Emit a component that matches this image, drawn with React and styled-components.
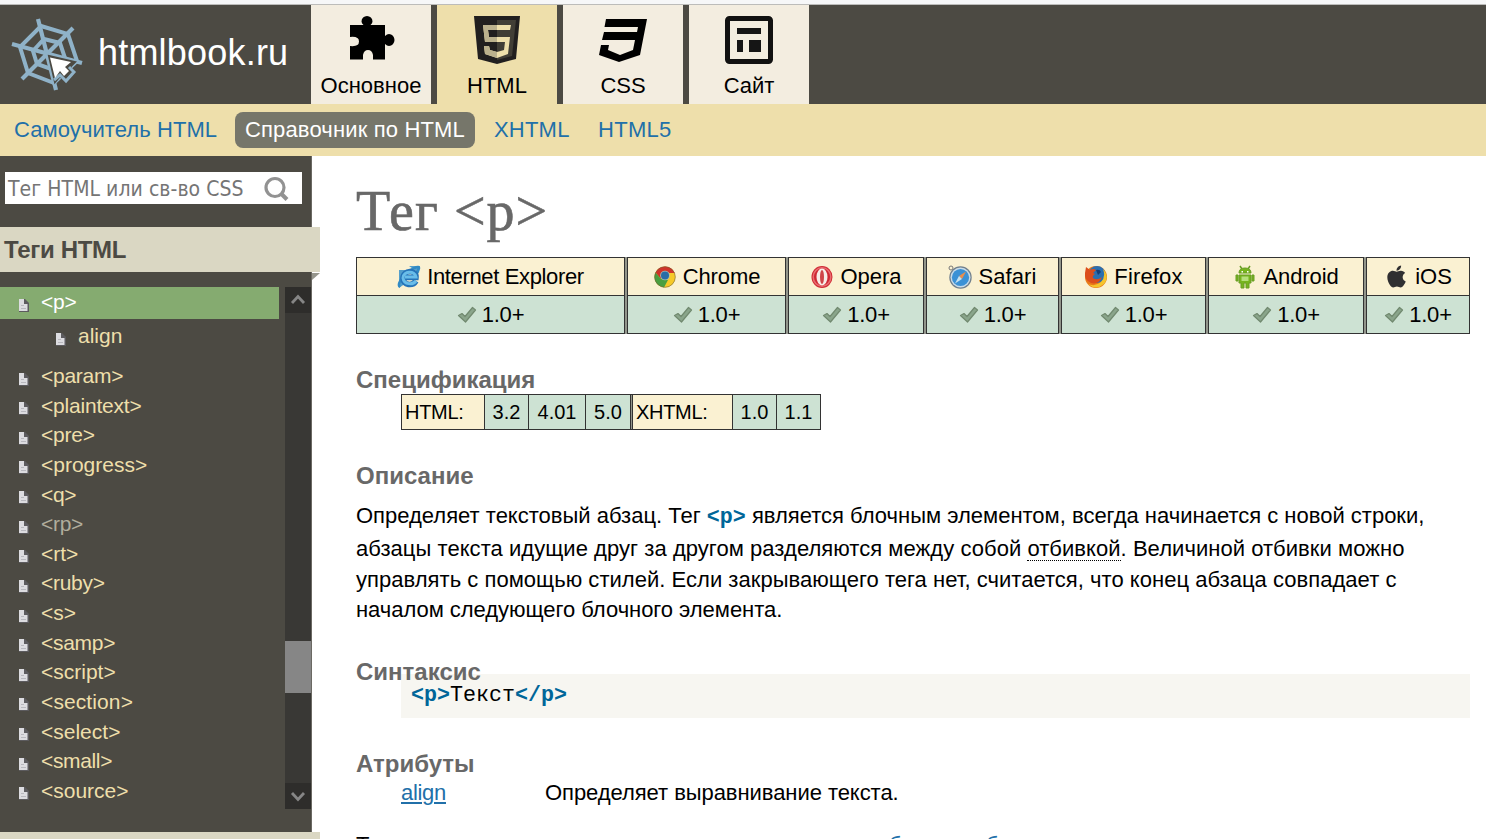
import React from "react";
import styled, { createGlobalStyle } from "styled-components";
import { FaApple } from "react-icons/fa";

const Global = createGlobalStyle`
  * { box-sizing: border-box; }
  body { margin: 0; background: #fff; overflow: hidden; }
  a { color: inherit; text-decoration: none; }
`;

const Page = styled.div`
  width: 1486px;
  height: 839px;
  overflow: hidden;
  display: flex;
  flex-direction: column;
  font: 22px "Liberation Sans", Arial, sans-serif;
  color: #000;
  white-space: nowrap;
`;
const TopStrip = styled.div`
  height: 5px;
  flex: none;
  background: #f6f7f8;
  border-bottom: 1px solid #bcbcba;
`;
const Header = styled.header`
  height: 99px;
  flex: none;
  display: flex;
  background: #4c4a43;
`;
const Brand = styled.a`
  width: 311px;
  display: flex;
  align-items: center;
  color: #fff;
  font-size: 36px;
  padding-bottom: 3px;
  letter-spacing: 0.2px;
  svg { flex: none; margin-right: 7px; }
`;
const Tabs = styled.nav`
  display: flex;
  gap: 6px;
`;
const Tab = styled.a`
  width: 120px;
  display: flex;
  flex-direction: column;
  align-items: center;
  padding-top: 11px;
  line-height: 26px;
  background: ${(p) => (p.$active ? "#eedfab" : "#f3ede0")};
  svg { margin-bottom: 9px; flex: none; }
`;
const SubNav = styled.nav`
  height: 52px;
  flex: none;
  display: flex;
  align-items: center;
  padding-left: 3px;
  background: #eedfab;
`;
const SubLink = styled.a`
  height: 36px;
  line-height: 35px;
  width: ${(p) => p.$w}px;
  padding-left: ${(p) => (p.$active ? 10 : 11)}px;
  margin-right: 8px;
  border-radius: 8px;
  color: ${(p) => (p.$active ? "#fff" : "#2170a9")};
  background: ${(p) => (p.$active ? "#76766a" : "transparent")};
  letter-spacing: ${(p) => p.$track || 0}px;
`;
const Body = styled.div`
  flex: 1;
  min-height: 0;
  display: flex;
`;
const Sidebar = styled.aside`
  width: 312px;
  flex: none;
  display: flex;
  flex-direction: column;
  background: #4c4a43;
  border-right: 1px solid #6b6963;
`;
const Search = styled.div`
  margin: 16px 9px 23px 5px;
  height: 32px;
  flex: none;
  display: flex;
  align-items: center;
  justify-content: space-between;
  padding: 1px 13px 0 3px;
  background: #fff;
  color: #757575;
  font: 21px "DejaVu Sans Condensed", "DejaVu Sans", sans-serif;
  font-stretch: condensed;
  letter-spacing: 0.05px;
`;
const Band = styled.div`
  width: 320px;
  height: 45px;
  flex: none;
  position: relative;
  padding-left: 4px;
  font-weight: bold;
  font-size: 24px;
  line-height: 45px;
  letter-spacing: -0.3px;
  color: #4c4a43;
  background: #dad7c3;
`;
const Fold = styled.svg`
  position: absolute;
  left: 312px;
  top: 46px;
`;
const ListArea = styled.div`
  height: 522px;
  flex: none;
  margin: 15px 0 23px;
  display: flex;
  justify-content: space-between;
`;
const TagList = styled.div`
  width: 279px;
  font-size: 21px;
  color: #eedfab;
`;
const TagRow = styled.a`
  display: flex;
  align-items: center;
  height: ${(p) => p.$h || 29.63}px;
  padding-left: ${(p) => (p.$nested ? 55 : 18)}px;
  margin-bottom: ${(p) => (p.$nested ? 7.8 : 0)}px;
  background: ${(p) => (p.$active ? "#85ab70" : "transparent")};
  color: ${(p) => (p.$active ? "#fff" : p.$muted ? "#b0ad9c" : "inherit")};
  svg { margin: 5px 12px 0 0; flex: none; }
  span { margin-top: ${(p) => (p.$active ? -2 : -1)}px; letter-spacing: ${(p) => p.$track || 0}px; }
`;
const ScrollBar = styled.div`
  width: 26px;
  display: flex;
  flex-direction: column;
  background: #393835;
`;
const ScrollButton = styled.div`
  height: 26px;
  background: #2e2d2b;
`;
const ScrollThumb = styled.div`
  height: 52px;
  margin: 328px 0 90px;
  background: #868686;
`;
const Main = styled.main`
  flex: 1;
  padding: 23px 16px 0 44px;
`;
const Title = styled.h1`
  margin: 0 0 14px;
  font: 56px/64px "Liberation Serif", "Times New Roman", serif;
  letter-spacing: 1px;
  -webkit-text-stroke: 0.6px #686868;
  color: #686868;
`;
const Support = styled.div`
  display: grid;
  grid-template-columns: 269px 159px 136px 133px 145px 156px 104px;
  gap: 0 2px;
  width: 1114px;
  height: 77px;
  background: #92958b;
`;
const Browser = styled.div`
  display: flex;
  flex-direction: column;
  border: 1px solid #333;
`;
const BrowserName = styled.div`
  height: 38px;
  display: flex;
  align-items: center;
  justify-content: center;
  gap: 6px;
  background: #faf1d2;
  border-bottom: 1px solid #333;
  letter-spacing: ${(p) => p.$track || 0}px;
`;
const BrowserVersion = styled.div`
  height: 37px;
  display: flex;
  align-items: center;
  justify-content: center;
  gap: 5px;
  letter-spacing: -0.2px;
  background: #cde2d3;
`;
const Heading = styled.h2`
  margin: ${(p) => p.$top}px 0 0;
  position: relative;
  font: bold 24px/28px "Liberation Sans", Arial, sans-serif;
  color: #686868;
`;
const SpecTable = styled.div`
  display: flex;
  margin-left: 45px;
  width: 420px;
  height: 36px;
  border: 1px solid #333;
  font-size: 20px;
  line-height: 34px;
`;
const Spec = styled.div`
  width: ${(p) => p.$w}px;
  padding-left: ${(p) => (p.$name ? 3 : 0)}px;
  text-align: ${(p) => (p.$name ? "left" : "center")};
  letter-spacing: ${(p) => (p.$name ? -0.3 : 0)}px;
  background: ${(p) => (p.$name ? "#faf1d2" : "#cde2d3")};
  border-right: ${(p) => (p.$last ? 0 : 1)}px solid #333;
`;
const SpecGap = styled.div`
  width: 2px;
  background: #92958b;
  border-right: 1px solid #333;
`;
const Paragraph = styled.p`
  margin: 9px 0 0;
`;
const Line = styled.span`
  display: block;
  height: ${(p) => p.$h}px;
  line-height: ${(p) => p.$h}px;
  letter-spacing: ${(p) => p.$track || 0}px;
`;
const Code = styled.code`
  font: bold 21.67px/1 "Liberation Mono", "Courier New", monospace;
  letter-spacing: 0;
  color: #069;
`;
const Term = styled.span`
  display: inline-block;
  line-height: 22px;
  border-bottom: 1px dotted #000;
`;
const Example = styled.pre`
  margin: -12px 0 0 45px;
  height: 44px;
  padding-left: 10px;
  background: #f7f6f1;
  font: 21.67px/43px "Liberation Mono", "Courier New", monospace;
`;
const Attribute = styled.div`
  display: flex;
  margin-left: 45px;
  line-height: 30px;
  a { width: 144px; color: #2170a9; text-decoration: underline; letter-spacing: -0.3px; }
  span { letter-spacing: -0.06px; }
`;
const More = styled.p`
  margin: 22px 0 0;
  line-height: 30px;
  a { color: #2170a9; }
`;

const Web = () => (
  <svg width="91" height="91" viewBox="0 8 91 91" fill="none" stroke="#8fb2c8" strokeWidth="4.200">
    <path d="M38 19 56 90M73 28 22 79M12 44 82 63" />
    <path d="M41 26 68 34 77 61 54 83 28 73 20 47ZM44 39 60 43 65 58 51 69 37 64 33 51Z" strokeWidth="4" />
    <path d="M49 56 75 62 70 67 74 72 65 81 60 76 55 82Z" fill="#4c4a43" stroke="#4c4a43" strokeWidth="2" />
    <path d="M54 80 60 75 66 81 74 72 69 67" strokeWidth="3" />
    <path d="M50 57.500 71 62 65 67 69 71 64 76 60 71 55 78Z" fill="#fff" stroke="none" />
  </svg>
);
const Puzzle = () => (
  <svg width="48" height="48" viewBox="0 0 48 48">
    <path d="M3 9H16.500Q14.500 7 14.500 5.500A5.500 5.500 0 0 1 25.500 5.500Q25.500 7 23.500 9H38V20Q40 18 42 18A5.500 6 0 0 1 42 30Q40 30 38 28V43.500H26V39Q25 34 21 34Q17 34 16 39V43.500H3V30Q12 31 12 25.500Q12 20 3 21Z" />
  </svg>
);
const Html5 = () => (
  <svg width="48" height="48" viewBox="0 0 48 48">
    <path d="M1 0H47L43 43 24 48 5 43Z" fill="#211f1f" />
    <path d="M24 4V44L39 40 43 4Z" fill="#413e36" />
    <path d="M38 9H10L12 26H32L31 34 24 36 17 34 16 30H11L12 38 24 42 35 38 37 21H16L15 14H37Z" fill="#eedfab" />
    <path d="M10 9H24V14H15L16 21H24V26H12ZM11 30H16L17 34 24 36V42L12 38Z" fill="#bbb18d" />
  </svg>
);
const Css3 = () => (
  <svg width="48" height="48" viewBox="0 0 48 48">
    <path d="M7 3H48L41 39 20 46 0 39 2 29H10L9 34 21 39 34 34 36 24H3L5 16H38L39 11H5.500Z" />
  </svg>
);
const Layout = () => (
  <svg width="48" height="48" viewBox="0 0 48 48">
    <rect x="2.500" y="2.500" width="43" height="43" rx="2" fill="none" stroke="#111" strokeWidth="5" />
    <path d="M12 12H36V18H12ZM12 24H18V36H12ZM24 24H36V36H24Z" fill="#151515" />
  </svg>
);
const Magnifier = () => (
  <svg width="26" height="26" viewBox="0 0 26 26" fill="none" stroke="#929292">
    <circle cx="12" cy="11.500" r="9" strokeWidth="3.200" />
    <path d="M18.500 18 24 23.500" strokeWidth="4" />
  </svg>
);
const Doc = () => (
  <svg width="11" height="13" viewBox="0 0 11 13">
    <path d="M1 0H7L11 4V13H1Z" fill="#5c5b5e" />
    <path d="M1 0H6V5H9.500V12H1Z" fill="#dcdce0" />
    <path d="M3 6H6V7H3ZM3 9H8V10H3Z" fill="#b8b8be" />
  </svg>
);
const Chevron = ({ down }) => (
  <svg width="26" height="26" viewBox="0 0 26 26" fill="none" stroke="#868686" strokeWidth="2.800">
    <path d={down ? "M7 10 13 16.500 19 10" : "M7 16 13 9.500 19 16"} />
  </svg>
);
const Check = () => (
  <svg width="20" height="18" viewBox="0 0 20 18">
    <path d="M1.500 9.500 5 7.500 8 10.500 15.500 1.500 18.500 4 8.500 16Z" fill="#8aa58b" stroke="#71896f" strokeWidth="1.200" strokeLinejoin="round" />
  </svg>
);
const IconBox = ({ children }) => (
  <svg width="24" height="24" viewBox="0 0 24 24">{children}</svg>
);
const Explorer = () => (
  <IconBox>
    <path d="M2 5H9L6 15 9 18 2 23ZM12 1H23L22 8Z" fill="#549fcb" />
    <path d="M3 22C0 20 4 12 12 6C18 2 22 1 22 3L20 8" fill="none" stroke="#318ac4" strokeWidth="2.600" />
    <path d="M19 16C16 21 6 21 6 13C6 5 20 4 19 12.500H8" fill="none" stroke="#2674b8" strokeWidth="5.600" />
    <path d="M19 16C16 20 7 20 6 13C6 6 18 5 19 12H8" fill="none" stroke="#69bde9" strokeWidth="3" />
  </IconBox>
);
const Chrome = () => (
  <IconBox>
    <circle cx="12" cy="12" r="10.500" fill="#f6c928" />
    <path d="M2.500 7.500A10.500 10.500 0 0 1 21.700 8L12 8 8 14Z" fill="#cf3329" />
    <path d="M2.500 7.500A10.500 10.500 0 0 0 11 22.500L15 15 8 14Z" fill="#4a9f40" />
    <circle cx="12" cy="12" r="10.300" fill="none" stroke="#705c38" strokeOpacity=".55" />
    <circle cx="12" cy="10.500" r="4.800" fill="#a9c3b6" />
    <circle cx="12" cy="10.500" r="4" fill="#286da7" />
  </IconBox>
);
const Opera = () => (
  <IconBox>
    <ellipse cx="12" cy="12" rx="10.500" ry="11" fill="#cf2934" />
    <ellipse cx="12" cy="12" rx="8.800" ry="9.300" fill="none" stroke="#e96c70" strokeWidth="1.500" />
    <ellipse cx="12" cy="12" rx="5.500" ry="8.500" fill="#f7ece7" />
    <ellipse cx="12" cy="12" rx="2" ry="7" fill="#cf4548" />
  </IconBox>
);
const Safari = () => (
  <IconBox>
    <circle cx="3" cy="3" r="2" fill="none" stroke="#777" />
    <circle cx="12.500" cy="12.500" r="11.200" fill="#71808d" />
    <circle cx="12.500" cy="12.500" r="10" fill="#c9dce9" />
    <circle cx="12.500" cy="12.500" r="8.600" fill="#3b91d5" />
    <path d="M18 6.500 14 14 11 11Z" fill="#e98e4d" />
    <path d="M7 18.500 11 11 14 14Z" fill="#c5e0ef" />
  </IconBox>
);
const Firefox = () => (
  <IconBox>
    <circle cx="12" cy="12" r="11" fill="#e97919" />
    <circle cx="13" cy="9.500" r="8.500" fill="#2c6fb0" />
    <path d="M1 8 2 2 6 5Q9 3 12 5L9 8 11 9Q8 11 9 13Q13 16 18 12Q15 20 7 18Q0 15 1 8Z" fill="#dc4e1c" />
    <path d="M19 4Q26 12 20 19Q12 26 4 19Q11 22 17 17Q22 12 19 4Z" fill="#f5c52d" />
    <path d="M12 5Q16 4 17 7L14 10Z" fill="#173d77" />
  </IconBox>
);
const Android = () => (
  <IconBox>
    <path d="M7 1 9 4M17 1 15 4" stroke="#699d24" strokeWidth="1.500" />
    <path d="M6 8Q6 3 12 3Q18 3 18 8ZM6 10H18V18H16V23H13V18H11V23H8V18H6ZM3 10H5V16H3ZM19 10H21V16H19Z" fill="#76b41e" stroke="#699d24" strokeWidth="1" />
    <path d="M8.500 11.500H15.500V16H8.500Z" fill="#b5df7c" />
    <path d="M8.500 6H10V7.500H8.500ZM14 6H15.500V7.500H14Z" fill="#fff" />
  </IconBox>
);

const browsers = [
  ["Internet Explorer", <Explorer />, -0.36],
  ["Chrome", <Chrome />, -0.1],
  ["Opera", <Opera />, 0],
  ["Safari", <Safari />, 0.1],
  ["Firefox", <Firefox />, 0.15],
  ["Android", <Android />, -0.1],
  ["iOS", <FaApple size={25} color="#2f2f31" />, 0],
];
const tags = [
  ["param", -0.25], ["plaintext", -0.2], ["pre", -0.2], ["progress", 0], ["q", -0.3],
  ["rp", -0.3], ["rt", 0], ["ruby", -0.3], ["s", 0], ["samp", -0.3], ["script", 0],
  ["section", 0.1], ["select", 0], ["small", -0.35], ["source", 0],
];

export default function App() {
  return (
    <Page>
      <Global />
      <TopStrip />
      <Header>
        <Brand href="#"><Web />htmlbook.ru</Brand>
        <Tabs>
          <Tab href="#"><Puzzle />Основное</Tab>
          <Tab href="#" $active><Html5 />HTML</Tab>
          <Tab href="#"><Css3 />CSS</Tab>
          <Tab href="#"><Layout />Сайт</Tab>
        </Tabs>
      </Header>
      <SubNav>
        <SubLink href="#" $w={224} $track={0.08}>Самоучитель HTML</SubLink>
        <SubLink href="#" $active $w={240} $track={0.15}>Справочник по HTML</SubLink>
        <SubLink href="#" $w={96} $track={0.2}>XHTML</SubLink>
        <SubLink href="#" $w={94} $track={0.3}>HTML5</SubLink>
      </SubNav>
      <Body>
        <Sidebar>
          <Search><span>Тег HTML или св-во CSS</span><Magnifier /></Search>
          <Band>
            Теги HTML
            <Fold width="8" height="8" viewBox="0 0 8 8"><path d="M0 0H8L0 7Z" fill="#96968d" /></Fold>
          </Band>
          <ListArea>
            <TagList>
              <TagRow href="#" $active $h={32} $track={-0.2}><Doc /><span>&lt;p&gt;</span></TagRow>
              <TagRow href="#" $nested $h={35}><Doc /><span>align</span></TagRow>
              {tags.map(([t, track]) => (
                <TagRow href="#" key={t} $muted={t === "rp"} $track={track}><Doc /><span>&lt;{t}&gt;</span></TagRow>
              ))}
            </TagList>
            <ScrollBar>
              <ScrollButton><Chevron /></ScrollButton>
              <ScrollThumb />
              <ScrollButton><Chevron down /></ScrollButton>
            </ScrollBar>
          </ListArea>
          <Band />
        </Sidebar>
        <Main>
          <Title>Тег &lt;p&gt;</Title>
          <Support>
            {browsers.map(([name, icon, track]) => (
              <Browser key={name}>
                <BrowserName $track={track}>{icon}<span>{name}</span></BrowserName>
                <BrowserVersion><Check /><span>1.0+</span></BrowserVersion>
              </Browser>
            ))}
          </Support>
          <Heading $top={32}>Спецификация</Heading>
          <SpecTable>
            <Spec $name $w={83}>HTML:</Spec>
            <Spec $w={44}>3.2</Spec>
            <Spec $w={57}>4.01</Spec>
            <Spec $w={45}>5.0</Spec>
            <SpecGap />
            <Spec $name $w={100}>XHTML:</Spec>
            <Spec $w={44}>1.0</Spec>
            <Spec $w={43} $last>1.1</Spec>
          </SpecTable>
          <Heading $top={32}>Описание</Heading>
          <Paragraph>
            <Line $h={33}>Определяет текстовый абзац. Тег <Code>&lt;p&gt;</Code> является блочным элементом, всегда начинается с новой строки,</Line>
            <Line $h={33} $track={0.045}>абзацы текста идущие друг за другом разделяются между собой <Term>отбивкой</Term>. Величиной отбивки можно</Line>
            <Line $h={29} $track={0.03}>управлять с помощью стилей. Если закрывающего тега нет, считается, что конец абзаца совпадает с</Line>
            <Line $h={31} $track={-0.04}>началом следующего блочного элемента.</Line>
          </Paragraph>
          <Heading $top={33}>Синтаксис</Heading>
          <Example><Code>&lt;p&gt;</Code>Текст<Code>&lt;/p&gt;</Code></Example>
          <Heading $top={32}>Атрибуты</Heading>
          <Attribute><a href="#">align</a><span>Определяет выравнивание текста.</span></Attribute>
          <More>Также для этого тега доступны универсальные <a href="#">атрибуты</a> и <a href="#">события</a>.</More>
        </Main>
      </Body>
    </Page>
  );
}
